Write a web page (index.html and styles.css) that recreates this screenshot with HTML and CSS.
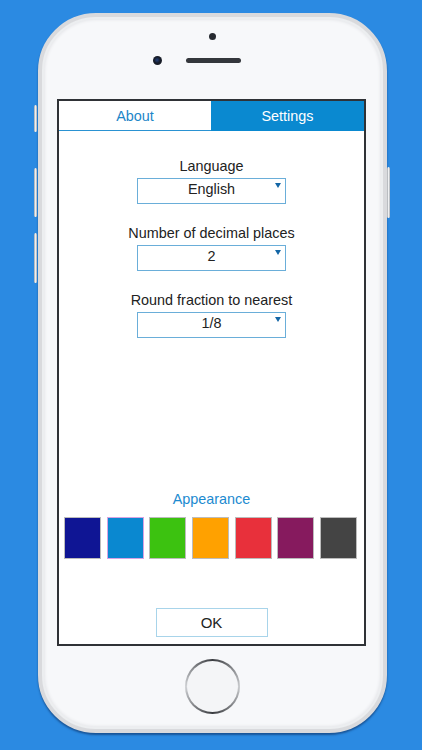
FILE: index.html
```html
<!DOCTYPE html>
<html>
<head>
<meta charset="utf-8">
<link rel="stylesheet" href="styles.css">
</head>
<body>
<div class="phone">
  <span class="side-btn mute"></span>
  <span class="side-btn vol-up"></span>
  <span class="side-btn vol-down"></span>
  <span class="side-btn power"></span>
  <div class="bezel-top">
    <div class="sensor"></div>
    <div class="earpiece">
      <span class="camera"></span>
      <span class="speaker"></span>
    </div>
  </div>
  <div class="screen">
    <div class="tabs">
      <div class="tab tab-about">About</div>
      <div class="tab tab-settings">Settings</div>
    </div>
    <div class="content">
      <div class="field">
        <div class="label">Language</div>
        <div class="select"><span>English</span><span class="arrow"></span></div>
      </div>
      <div class="field">
        <div class="label">Number of decimal places</div>
        <div class="select"><span>2</span><span class="arrow"></span></div>
      </div>
      <div class="field">
        <div class="label">Round fraction to nearest</div>
        <div class="select"><span>1/8</span><span class="arrow"></span></div>
      </div>
      <div class="appearance">
        <div class="app-title">Appearance</div>
        <div class="swatches">
          <div class="swatch navy"></div>
          <div class="swatch blue selected"></div>
          <div class="swatch green"></div>
          <div class="swatch orange"></div>
          <div class="swatch red"></div>
          <div class="swatch purple"></div>
          <div class="swatch gray"></div>
        </div>
      </div>
      <div class="ok-row"><div class="ok">OK</div></div>
    </div>
  </div>
  <div class="bezel-bottom">
    <div class="home"></div>
  </div>
</div>
</body>
</html>
```

FILE: styles.css
```css
html, body {
  margin: 0;
  padding: 0;
}
body {
  background: #2b8ae2;
  width: 422px;
  height: 750px;
  overflow: hidden;
  font-family: "Liberation Sans", Arial, sans-serif;
}
.phone {
  position: relative;
  box-sizing: border-box;
  width: 349px;
  height: 720px;
  margin: 13px 0 0 38px;
  border: 4px solid #d9dadd;
  border-radius: 58px;
  background: #f7f8fa;
  box-shadow: 0 2px 2px rgba(10, 40, 90, 0.55), inset 0 0 0 2px #eceef0, inset 0 0 3px 3px #e6e7ea;
  padding: 0 17px 0 15px;
  display: flex;
  flex-direction: column;
}
.side-btn {
  position: absolute;
  width: 3px;
  border-radius: 2px;
  background: linear-gradient(90deg, #9fa3a8, #eef0f2 50%, #a9adb2);
}
.mute { left: -8px; top: 88px; height: 27px; }
.vol-up { left: -8px; top: 151px; height: 49px; }
.vol-down { left: -8px; top: 216px; height: 50px; }
.power { right: -7px; top: 150px; height: 51px; }

.bezel-top {
  height: 82px;
  display: flex;
  flex-direction: column;
  align-items: center;
}
.sensor {
  width: 7px;
  height: 7px;
  border-radius: 50%;
  background: #262a30;
  margin: 16px 0 0 2px;
}
.earpiece {
  position: relative;
  margin-top: 18px;
  margin-left: 3px;
  width: 55px;
  height: 6px;
}
.speaker {
  display: block;
  width: 55px;
  height: 5px;
  border-radius: 3px;
  background: #34373c;
}
.camera {
  position: absolute;
  left: -33px;
  top: -2px;
  width: 9px;
  height: 9px;
  border-radius: 50%;
  background: radial-gradient(circle at 45% 45%, #23407a 0, #151a26 45%, #22262c 100%);
}

.screen {
  box-sizing: border-box;
  width: 309px;
  height: 547px;
  border: 2px solid #2f3236;
  background: #ffffff;
  display: flex;
  flex-direction: column;
}
.tabs {
  display: flex;
  height: 30px;
}
.tab {
  box-sizing: border-box;
  display: flex;
  align-items: center;
  justify-content: center;
  font-size: 14.4px;
}
.tab-about {
  width: 152px;
  color: #1c86c8;
  border-bottom: 1px solid #2a92d2;
  background: #ffffff;
}
.tab-settings {
  flex: 1;
  color: #ffffff;
  background: #0a89d0;
}
.content {
  flex: 1;
  display: flex;
  flex-direction: column;
  align-items: center;
  padding: 27px 0 7px;
}
.field {
  display: flex;
  flex-direction: column;
  align-items: center;
  margin-bottom: 21px;
}
.label {
  font-size: 14.4px;
  line-height: 16px;
  color: #222222;
}
.select {
  position: relative;
  box-sizing: border-box;
  width: 149px;
  height: 26px;
  margin-top: 4px;
  border: 1.5px solid #6aaed9;
  display: flex;
  align-items: center;
  justify-content: center;
  font-size: 14.4px;
  color: #222222;
  padding-bottom: 4px;
}
.arrow {
  position: absolute;
  right: 4px;
  top: 4px;
  width: 0;
  height: 0;
  border-left: 3px solid transparent;
  border-right: 3px solid transparent;
  border-top: 5px solid #1466a6;
}
.appearance {
  margin-top: auto;
  display: flex;
  flex-direction: column;
  align-items: center;
  width: 100%;
}
.app-title {
  font-size: 14.4px;
  line-height: 16px;
  color: #1c8ad0;
  margin-bottom: 10px;
}
.swatches {
  display: flex;
  gap: 5.66px;
  padding-right: 2px;
  justify-content: center;
}
.swatch {
  box-sizing: border-box;
  width: 37px;
  height: 42px;
  border: 1px solid #bcbcbc;
}
.navy { background: #0f1594; }
.blue { background: #0a88d0; }
.selected { border-color: #d7a2e3; }
.green { background: #3cc210; }
.orange { background: #ffa100; }
.purple { background: #861a5e; }
.red { background: #e8303b; }
.gray { background: #444444; }
.ok-row {
  margin-top: 49px;
  display: flex;
  justify-content: center;
}
.ok {
  box-sizing: border-box;
  width: 112px;
  height: 29px;
  border: 1.5px solid #a8d4ea;
  display: flex;
  align-items: center;
  justify-content: center;
  font-size: 15px;
  color: #222222;
}
.bezel-bottom {
  display: flex;
  justify-content: center;
  padding-top: 13px;
}
.home {
  box-sizing: border-box;
  width: 55px;
  height: 55px;
  margin-left: 2px;
  border-radius: 50%;
  border: 2px solid transparent;
  background: linear-gradient(#f4f5f7, #f4f5f7) padding-box, conic-gradient(from 0deg, #3a3c40, #c8cacd 25%, #3a3c40 50%, #d0d2d5 75%, #3a3c40) border-box;
}
```
